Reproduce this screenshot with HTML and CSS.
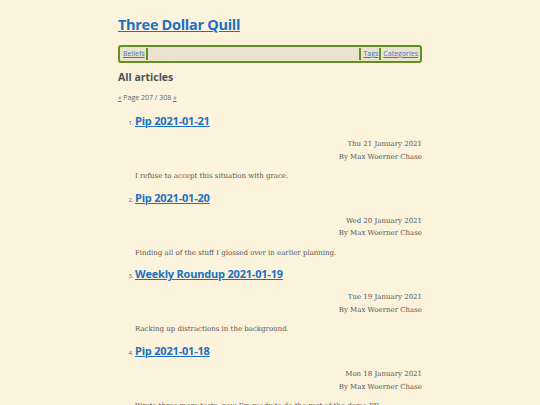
FILE: index.html
```html
<!DOCTYPE html>
<html>
<head>
<meta charset="utf-8">
<link rel="stylesheet" href="styles.css">
</head>
<body>
<div class="page">
  <header class="site-header">
    <h1 class="site-title"><a href="#">Three Dollar Quill</a></h1>
    <nav class="nav">
      <a class="nav-item nav-left" href="#">Beliefs</a>
      <span class="nav-spacer"></span>
      <a class="nav-item nav-right" href="#">Tags</a>
      <a class="nav-item nav-right" href="#">Categories</a>
    </nav>
  </header>
  <main>
    <h2 class="section-title">All articles</h2>
    <p class="pager"><a href="#">«</a> Page 207 / 308 <a href="#">»</a></p>
    <ol class="articles" start="1">
      <li class="article">
        <h3 class="article-title"><a href="#">Pip 2021-01-21</a></h3>
        <div class="meta"><div>Thu 21 January 2021</div><div>By Max Woerner Chase</div></div>
        <p class="summary">I refuse to accept this situation with grace.</p>
      </li>
      <li class="article">
        <h3 class="article-title"><a href="#">Pip 2021-01-20</a></h3>
        <div class="meta"><div>Wed 20 January 2021</div><div>By Max Woerner Chase</div></div>
        <p class="summary">Finding all of the stuff I glossed over in earlier planning.</p>
      </li>
      <li class="article">
        <h3 class="article-title"><a href="#">Weekly Roundup 2021-01-19</a></h3>
        <div class="meta"><div>Tue 19 January 2021</div><div>By Max Woerner Chase</div></div>
        <p class="summary">Racking up distractions in the background.</p>
      </li>
      <li class="article">
        <h3 class="article-title"><a href="#">Pip 2021-01-18</a></h3>
        <div class="meta"><div>Mon 18 January 2021</div><div>By Max Woerner Chase</div></div>
        <p class="summary">Wrote three more tests, now I'm ready to do the rest of the demo PR.</p>
      </li>
    </ol>
  </main>
</div>
</body>
</html>
```
FILE: styles.css
```css
html, body {
  margin: 0;
  padding: 0;
  background: #fbf3dc;
}
body {
  font-family: "Open Sans", "Liberation Sans", sans-serif;
  color: #555555;
}
.page {
  width: 304px;
  margin: 0 auto;
  padding-top: 14px;
}
.site-title {
  margin: 0;
  font-size: 14.5px;
  font-weight: 700;
  line-height: 22px;
  letter-spacing: -0.3px;
}
.site-title a, .article-title a {
  color: #1b70c3;
  text-decoration: underline;
}
.nav {
  display: flex;
  align-items: stretch;
  margin-top: 9px;
  height: 12px;
  border: 2px solid #63911f;
  border-radius: 3px;
  background: #ebe3cf;
  padding: 1px 1px;
  font-size: 7px;
  line-height: 12px;
}
.nav-item {
  color: #3a78bf;
  text-decoration: underline;
  padding: 0 1px 0 2px;
}
.nav-left {
  border-right: 2px solid #63911f;
}
.nav-right {
  border-left: 2px solid #63911f;
}
.nav-spacer {
  flex: 1;
}
.section-title {
  margin: 6px 0 0;
  font-size: 10.5px;
  font-weight: 700;
  line-height: 16px;
  color: #4a5356;
}
.pager {
  margin: 8px 0 0;
  font-size: 7px;
  line-height: 10px;
  color: #666;
}
.pager a {
  color: #3a78bf;
}
.articles {
  margin: 9px 0 0;
  padding-left: 17px;
}
.article {
  font-size: 6px;
  color: #666;
}
.article-title {
  margin: 0;
  font-size: 11px;
  font-weight: 700;
  line-height: 18px;
  letter-spacing: -0.2px;
  display: inline;
}
.meta {
  text-align: right;
  font-family: "DejaVu Serif", serif;
  font-size: 7px;
  line-height: 12.5px;
  color: #555;
  margin-top: 8px;
}
.summary {
  font-family: "DejaVu Serif", serif;
  font-size: 7px;
  line-height: 10px;
  color: #555;
  margin: 8px 0 0;
  padding-bottom: 7.7px;
}
```
